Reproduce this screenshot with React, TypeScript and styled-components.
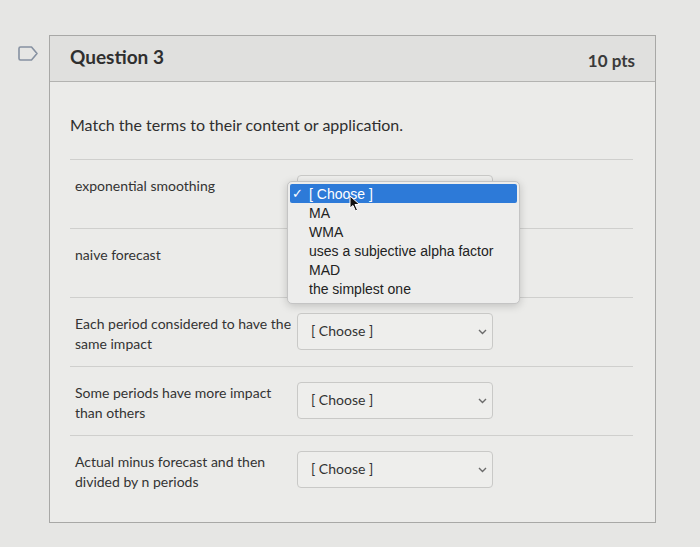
import React from 'react';
import styled, { createGlobalStyle } from 'styled-components';

const GlobalStyle = createGlobalStyle`
    html, body {
        margin: 0;
        padding: 0;
        background: #e6e6e4;
    }
    body {
        font-family: Lato, 'Open Sans', sans-serif;
        color: #333333;
    }
`;

type RowType = {
    label: string;
    open?: boolean;
};

const rows: RowType[] = [
    { label: 'exponential smoothing', open: true },
    { label: 'naive forecast' },
    { label: 'Each period considered to have the same impact' },
    { label: 'Some periods have more impact than others' },
    { label: 'Actual minus forecast and then divided by n periods' },
];

const options = ['[ Choose ]', 'MA', 'WMA', 'uses a subjective alpha factor', 'MAD', 'the simplest one'];

const FlagIcon = () => (
    <svg width='21' height='15' viewBox='0 0 21 15'>
        <path d='M2.5 1 H13.5 L19 7.5 L13.5 14 H2.5 Q1 14 1 12.5 V2.5 Q1 1 2.5 1 Z' fill='none' stroke='#8691a1' strokeWidth='1.6' strokeLinejoin='round' />
    </svg>
);

const Chevron = () => (
    <svg width='9' height='6' viewBox='0 0 9 6'>
        <path d='M1 1 L4.5 4.5 L8 1' fill='none' stroke='#6b6b6b' strokeWidth='1.4' />
    </svg>
);

const Cursor = () => (
    <svg width='12' height='17' viewBox='0 0 12 17'>
        <path d='M1 1 L1 13 L4 10.5 L6.5 16 L8.5 15 L6 9.5 L10.5 9.5 Z' fill='#111' stroke='#fff' strokeWidth='1' />
    </svg>
);

const Menu = () => (
    <MenuBox>
        {options.map((o, i) => (
            <MenuItem key={o} selected={i === 0}>
                <Check>{i === 0 ? '✓' : ''}</Check>
                {o}
            </MenuItem>
        ))}
        <CursorWrap>
            <Cursor />
        </CursorWrap>
    </MenuBox>
);

export default function App() {
    return (
        <>
            <GlobalStyle />
            <Page>
                <FlagCol>
                    <FlagIcon />
                </FlagCol>
                <Card>
                    <Header>
                        <Title>Question 3</Title>
                        <Points>10 pts</Points>
                    </Header>
                    <Body>
                        <Prompt>Match the terms to their content or application.</Prompt>
                        {rows.map((r) => (
                            <Row key={r.label}>
                                <Label>{r.label}</Label>
                                <SelectWrap>
                                    <Select>
                                        <span>[ Choose ]</span>
                                        <Chevron />
                                    </Select>
                                    {r.open && <Menu />}
                                </SelectWrap>
                            </Row>
                        ))}
                    </Body>
                </Card>
            </Page>
        </>
    );
}

const Page = styled.div`
    display: flex;
    padding-top: 35px;
    height: 547px;
    box-sizing: border-box;
`;

const FlagCol = styled.div`
    width: 49px;
    padding: 10px 0 0 18px;
    box-sizing: border-box;
`;

const Card = styled.div`
    width: 607px;
    height: 488px;
    box-sizing: border-box;
    border: 1px solid #a8a8a6;
    background: #ebebe9;
`;

const Header = styled.div`
    height: 46px;
    box-sizing: border-box;
    display: flex;
    align-items: center;
    justify-content: space-between;
    padding: 0 20px 0 20px;
    background: #e0e0de;
    border-bottom: 1px solid #b3b3b1;
`;

const Title = styled.h2`
    margin: 0 0 5px;
    font: 700 19px Lato, sans-serif;
    color: #2f2f2f;
`;

const Points = styled.span`
    font: 700 17px Lato, sans-serif;
    color: #3a3a3a;
    padding-top: 3px;
`;

const Body = styled.div`
    padding: 32px 22px 0 20px;
`;

const Prompt = styled.p`
    margin: 0 0 23px;
    font: 400 16px/22px Lato, sans-serif;
    color: #2f2f2f;
`;

const Row = styled.div`
    display: flex;
    align-items: flex-start;
    height: 69px;
    box-sizing: border-box;
    border-top: 1px solid #cfcfcd;
    padding: 15px 0 0 5px;
`;

const Label = styled.div`
    width: 222px;
    padding-top: 1px;
    font: 400 14px/20px Lato, sans-serif;
    color: #333;
`;

const SelectWrap = styled.div`
    position: relative;
`;

const Select = styled.div`
    width: 196px;
    height: 37px;
    box-sizing: border-box;
    border: 1px solid #c9c9c7;
    border-radius: 4px;
    background: #eeeeec;
    display: flex;
    align-items: center;
    justify-content: space-between;
    padding: 0 5px 3px 13px;
    font: 400 14px Lato, sans-serif;
    color: #333;

    svg {
        margin-top: 4px;
    }
`;

const MenuBox = styled.div`
    position: absolute;
    z-index: 10;
    left: -10px;
    top: 6px;
    width: 233px;
    box-sizing: border-box;
    padding: 2px 2px 5px;
    background: #ededec;
    border: 1px solid #c4c4c4;
    border-radius: 5px;
    box-shadow: 0 2px 8px rgba(0, 0, 0, 0.18);
`;

const MenuItem = styled.div<{ selected: boolean }>`
    display: flex;
    align-items: center;
    height: 19px;
    font: 400 14px 'Liberation Sans', Arial, sans-serif;
    color: ${(p) => (p.selected ? '#ffffff' : '#222222')};
    background: ${(p) => (p.selected ? '#2d7ad8' : 'transparent')};
    border-radius: 2px;
`;

const Check = styled.span`
    width: 19px;
    padding-left: 2px;
    box-sizing: border-box;
    font-size: 13px;
`;

const CursorWrap = styled.div`
    position: absolute;
    left: 61px;
    top: 13px;
`;
